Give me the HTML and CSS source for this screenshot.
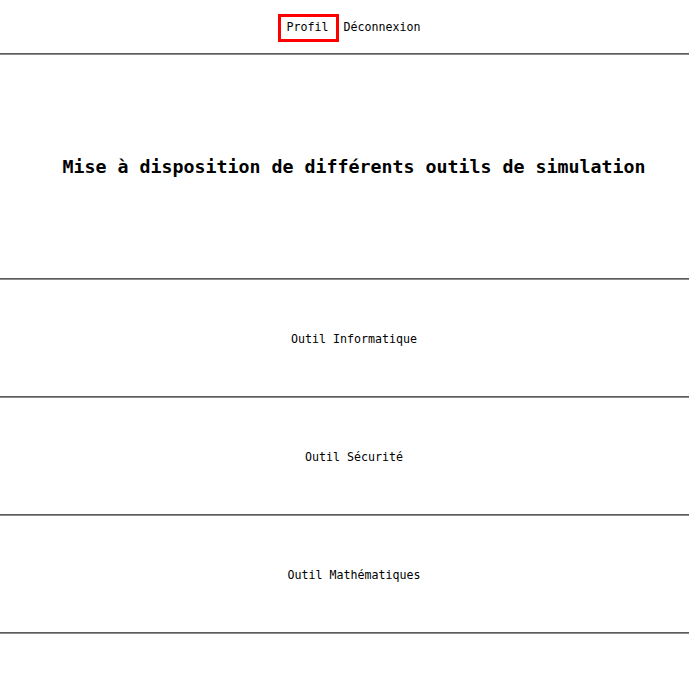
FILE: index.html
```html
<!DOCTYPE html>
<html lang="fr">
<head>
<meta charset="utf-8">
<title>Outils de simulation</title>
<link rel="stylesheet" href="styles.css">
</head>
<body>
<header class="topbar">
  <nav class="nav">
    <a class="nav-link nav-link--active" href="#">Profil</a>
    <a class="nav-link nav-link--plain" href="#">Déconnexion</a>
  </nav>
</header>
<hr class="rule">
<section class="hero">
  <h1 class="hero-title">Mise à disposition de différents outils de simulation</h1>
</section>
<hr class="rule">
<section class="tool"><a class="tool-link" href="#">Outil Informatique</a></section>
<hr class="rule">
<section class="tool"><a class="tool-link" href="#">Outil Sécurité</a></section>
<hr class="rule">
<section class="tool"><a class="tool-link" href="#">Outil Mathématiques</a></section>
<hr class="rule">
</body>
</html>
```
FILE: styles.css
```css
html, body {
  margin: 0;
  padding: 0;
  background: #ffffff;
}
body {
  font-family: "DejaVu Sans Mono", "Liberation Mono", monospace;
  font-size: 11.63px;
  color: #000;
}
.topbar {
  height: 53px;
  box-sizing: border-box;
  padding: 14px 0 0 19px;
}
.nav {
  display: flex;
  justify-content: center;
  align-items: flex-start;
  gap: 5px;
}
.nav-link {
  color: #000;
  text-decoration: none;
  line-height: 16px;
}
.nav-link--active {
  border: 3px solid #ff0000;
  padding: 2px 7px 4px 6px;
}
.nav-link--plain {
  padding-top: 5px;
  padding-right: 10px;
}
.rule {
  margin: 0;
  border: 0;
  height: 0;
  border-top: 1px solid #5c5c5c;
  border-bottom: 1px solid #8c8c8c;
}
.hero {
  height: 223px;
  box-sizing: border-box;
  padding: 0 0 0 19px;
  display: flex;
  align-items: center;
  justify-content: center;
}
.hero-title {
  margin: 0;
  font-size: 18.27px;
  font-weight: bold;
  line-height: 24px;
}
.tool {
  height: 116px;
  box-sizing: border-box;
  padding: 2px 0 0 19px;
  display: flex;
  align-items: center;
  justify-content: center;
}
.tool-link {
  color: #000;
  text-decoration: none;
  line-height: 16px;
}
```
